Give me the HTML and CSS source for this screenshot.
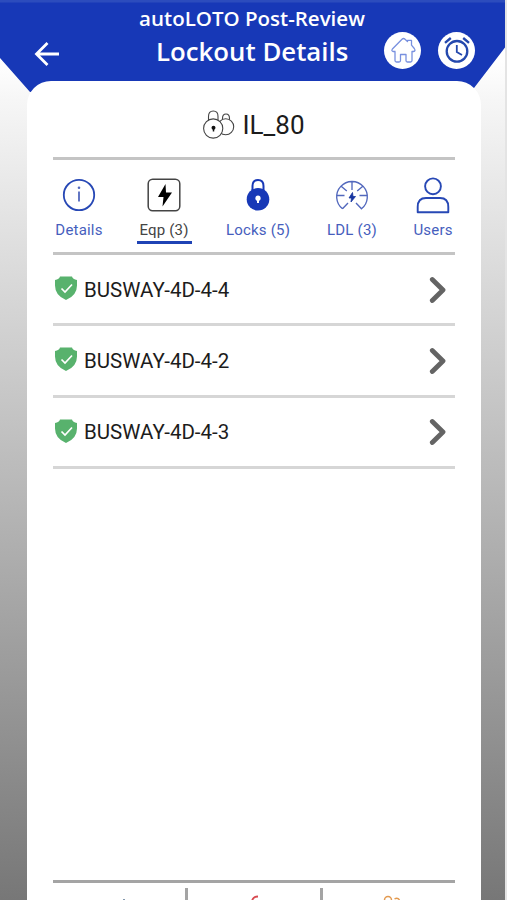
FILE: index.html
```html
<!DOCTYPE html>
<html lang="en">
<head>
<meta charset="utf-8">
<title>Lockout Details</title>
<link rel="stylesheet" href="styles.css">
</head>
<body>
<div class="app">
  <header class="header">
    <div class="subtitle">autoLOTO Post-Review</div>
    <div class="bar">
      <svg class="back" width="26" height="26" viewBox="0 0 26 26"><path d="M25 13H2.500M13.500 2L2.500 13L13.500 24" fill="none" stroke="#fff" stroke-width="2.800"/></svg>
      <h1 class="title">Lockout Details</h1>
      <div class="round">
        <svg width="36" height="36" viewBox="0 0 36 36"><path d="M10.500 19.500H8.200Q6 19 7.400 17L17 7.200Q18.500 5.800 20 7.200L22.500 9.500V8.300H26.500V13.200L29.300 16.500Q31 19 28.500 19.500H27V28.500Q27 30 25.500 30H22.300Q21 30 21 28.500V22.500H15.500V28.500Q15.500 30 14 30H11.500Q10 30 10 28.500V19.500" fill="none" stroke="#7890df" stroke-width="1.300" stroke-linejoin="round"/></svg>
      </div>
      <div class="round">
        <svg width="36" height="36" viewBox="0 0 36 36" fill="none" stroke="#2448ad"><circle cx="18" cy="19.300" r="10.300" stroke-width="2.300"/><path d="M17.800 13V20L23 23" stroke-width="1.800"/><path d="M6 10.800L11.800 6M24.200 6L30 10.800" stroke-width="2.400"/></svg>
      </div>
    </div>
  </header>
  <main class="card">
    <div class="heading">
      <svg width="32" height="30" viewBox="0 0 32 30" fill="#fff" stroke="#444" stroke-width="1.100"><path d="M19.500 14V8.500Q19.500 4 23 4T26.500 8.500V14"/><circle cx="22.700" cy="16.700" r="8"/><path d="M5.500 13V6.500Q5.500 1 10.300 1T15 6.500V13"/><circle cx="10.200" cy="18.500" r="9.600"/><circle cx="10.500" cy="17.800" r="2" fill="#111" stroke="none"/><path d="M10.500 18V21.500" stroke="#111" stroke-width="1.500"/></svg>
      <span>IL_80</span>
    </div>
    <nav class="tabs">
      <div class="tab">
        <svg width="34" height="34" viewBox="0 0 34 34"><circle cx="17" cy="17" r="15.200" fill="none" stroke="#2748b5" stroke-width="1.800"/><path d="M17 13.500V23.500" stroke="#5268bd" stroke-width="1.800"/><circle cx="17" cy="9.700" r="1.300" fill="#5268bd"/></svg>
        <span>Details</span>
      </div>
      <div class="tab active">
        <svg width="34" height="34" viewBox="0 0 34 34"><rect x="1.200" y="1.200" width="31.600" height="31.600" rx="4.500" fill="none" stroke="#444" stroke-width="1.500"/><path d="M18.500 6L11 19H16.500L15.500 28.500L25 14.500H19Z" fill="#000"/></svg>
        <span>Eqp (3)</span>
      </div>
      <div class="tab">
        <svg width="34" height="34" viewBox="0 0 34 34"><path d="M11.500 15V8Q11.500 2 17 2T22.500 8V15" fill="none" stroke="#1738b7" stroke-width="2"/><circle cx="17" cy="21.300" r="11.300" fill="#1738b7"/><circle cx="17" cy="20.200" r="2.600" fill="#fff"/><path d="M17 20V25" stroke="#fff" stroke-width="2"/></svg>
        <span>Locks (5)</span>
      </div>
      <div class="tab">
        <svg width="34" height="34" viewBox="0 0 34 34" fill="none" stroke="#5268bd" stroke-width="1.350"><path d="M7.500 30.800A15.300 15.300 0 1 1 26.500 30.800L21 25M7.500 30.800L13 25M2 17.500H9.500M24.500 17.500H32M17 3.500V12M6.500 8.500L11.800 13M27.500 8.500L22.200 13"/><path d="M17.500 14.500L14 20H16.500L16 24L20.500 18.500H18Z" fill="#1735a0" stroke="#1735a0" stroke-width=".8"/></svg>
        <span>LDL (3)</span>
      </div>
      <div class="tab users">
        <svg width="34" height="38" viewBox="0 0 34 38" fill="none" stroke="#2748b5" stroke-width="1.900"><circle cx="17" cy="10.300" r="7.900"/><path d="M1.700 36.200V31Q1.700 22 10 22H24Q32.300 22 32.300 31V36.200Z" stroke-linejoin="round"/></svg>
        <span>Users</span>
      </div>
    </nav>
    <ul class="list">
      <li class="row">
        <svg class="shield" width="22" height="24" viewBox="0 0 22 24"><path d="M5 .5H17Q17.700 3.400 22 4V9.500Q22 19.500 11 24Q0 19.500 0 9.500V4Q4.300 3.400 5 .5Z" fill="#58b26d"/><path d="M6.500 12.500L10 16L17 8.500" fill="none" stroke="#fff" stroke-width="1.700"/></svg>
        <span>BUSWAY-4D-4-4</span>
        <svg class="chev" width="18" height="28" viewBox="0 0 18 28"><path d="M3.300 3.500L14 14L3.300 24.500" fill="none" stroke="#646464" stroke-width="4.800" stroke-linecap="round" stroke-linejoin="round"/></svg>
      </li>
      <li class="row">
        <svg class="shield" width="22" height="24" viewBox="0 0 22 24"><path d="M5 .5H17Q17.700 3.400 22 4V9.500Q22 19.500 11 24Q0 19.500 0 9.500V4Q4.300 3.400 5 .5Z" fill="#58b26d"/><path d="M6.500 12.500L10 16L17 8.500" fill="none" stroke="#fff" stroke-width="1.700"/></svg>
        <span>BUSWAY-4D-4-2</span>
        <svg class="chev" width="18" height="28" viewBox="0 0 18 28"><path d="M3.300 3.500L14 14L3.300 24.500" fill="none" stroke="#646464" stroke-width="4.800" stroke-linecap="round" stroke-linejoin="round"/></svg>
      </li>
      <li class="row">
        <svg class="shield" width="22" height="24" viewBox="0 0 22 24"><path d="M5 .5H17Q17.700 3.400 22 4V9.500Q22 19.500 11 24Q0 19.500 0 9.500V4Q4.300 3.400 5 .5Z" fill="#58b26d"/><path d="M6.500 12.500L10 16L17 8.500" fill="none" stroke="#fff" stroke-width="1.700"/></svg>
        <span>BUSWAY-4D-4-3</span>
        <svg class="chev" width="18" height="28" viewBox="0 0 18 28"><path d="M3.300 3.500L14 14L3.300 24.500" fill="none" stroke="#646464" stroke-width="4.800" stroke-linecap="round" stroke-linejoin="round"/></svg>
      </li>
    </ul>
    <footer class="actions">
      <div class="action"><svg width="24" height="5" viewBox="0 0 24 5"><path d="M16 4.500H18" fill="none" stroke="#8398ac"/></svg></div>
      <div class="action"><svg width="24" height="5" viewBox="0 0 24 5"><path d="M10 6Q11 1.500 16 1.500" fill="none" stroke="#d84a50" stroke-width="1.800"/></svg></div>
      <div class="action"><svg width="24" height="5" viewBox="0 0 24 5" fill="none" stroke="#e39a50" stroke-width="1.500"><circle cx="11" cy="5" r="3.500"/><path d="M17.500 4Q20.500 2 22.500 5"/></svg></div>
    </footer>
  </main>
</div>
</body>
</html>
```
FILE: styles.css
```css
* { box-sizing: border-box; }
body { margin: 0; }
.app {
  width: 507px;
  height: 900px;
  overflow: hidden;
  display: flex;
  flex-direction: column;
  border-right: 2px solid #e4e4e4;
  background: linear-gradient(#fff 60px, #f6f6f6 100px, #d9d9d9 280px, #777 900px);
  font-family: Roboto, sans-serif;
}
.header {
  flex: none;
  width: 507px;
  height: 92px;
  padding-top: 6px;
  background: linear-gradient(#2c4cbd 2px, #1738b7 3px);
  clip-path: polygon(0 0, 100% 0, 100% 45px, 474px 88px, 474px 92px, 30px 92px, 0 58px);
  color: #fff;
  font-family: "Open Sans", sans-serif;
}
.subtitle {
  padding-right: 3px;
  text-align: center;
  font-size: 20.500px;
  font-weight: 600;
  line-height: 24px;
}
.bar {
  display: flex;
  align-items: center;
  height: 40px;
  padding-left: 34px;
}
.back { margin-top: 7px; }
.title {
  width: 194px;
  margin: 2px 34px 0 96px;
  font-size: 25.800px;
  font-weight: 600;
  line-height: 36px;
  white-space: nowrap;
}
.round {
  flex: none;
  width: 37px;
  height: 37px;
  margin-right: 17px;
  display: grid;
  place-items: center;
  border-radius: 50%;
  background: #fff;
}
.card {
  flex: 1;
  width: 454px;
  margin: -11px 0 0 27px;
  padding: 0 26px;
  display: flex;
  flex-direction: column;
  border-radius: 24px 24px 0 0;
  background: #fff;
  position: relative;
}
.heading {
  height: 79px;
  padding-top: 12px;
  display: flex;
  align-items: center;
  justify-content: center;
  gap: 7px;
  border-bottom: 3px solid #c4c4c4;
  color: #1c1c1c;
  font-size: 26px;
}
.tabs {
  height: 95px;
  display: grid;
  grid-template-columns: 52px 118px 70px 118px 44px;
  justify-items: center;
  border-bottom: 3px solid #c4c4c4;
}
.tab {
  height: 84px;
  padding-top: 18px;
  display: flex;
  flex-direction: column;
  align-items: center;
  color: #465ebd;
  font-size: 15px;
  letter-spacing: .2px;
  line-height: 18px;
  white-space: nowrap;
}
.tab span { margin-top: auto; margin-bottom: 5px; }
.users { padding-top: 16px; }
.active { width: 55px; border-bottom: 3px solid #1f43b5; color: #444; }
.active span { margin-bottom: 2px; }
.list { margin: 0; padding: 0; list-style: none; }
.row {
  height: 71.300px;
  padding: 1px 8px 0 2px;
  display: flex;
  align-items: center;
  border-bottom: 3px solid #d6d6d6;
  color: #1c1c1c;
  font-size: 20.500px;
}
.shield { margin: -3px 7px 0 0; }
.chev { margin-left: auto; }
.actions {
  height: 20px;
  margin-top: auto;
  padding-top: 5px;
  display: grid;
  grid-template-columns: 132px 135px 1fr;
  border-top: 3px solid #a4a4a4;
}
.action { display: flex; align-items: flex-end; justify-content: center; height: 12px; }
.action + .action { border-left: 3px solid #a4a4a4; }
```
